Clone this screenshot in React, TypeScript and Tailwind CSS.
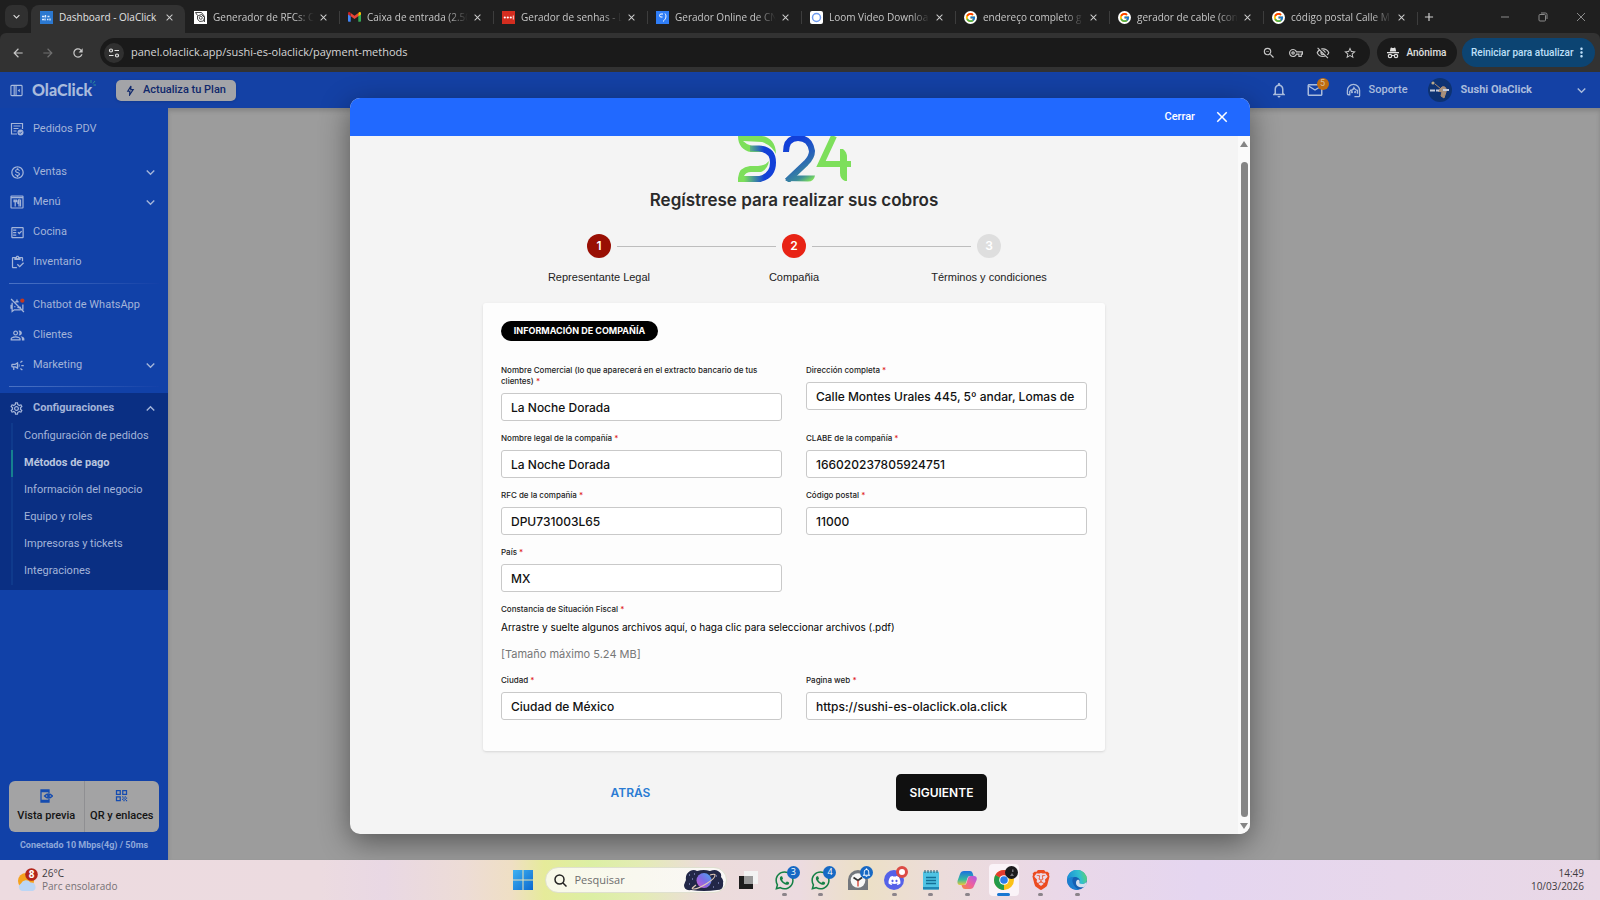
import { useState, ReactNode } from 'react'
import {
  MdAdd,
  MdArrowBack,
  MdArrowForward,
  MdClose,
  MdKeyboardArrowDown,
  MdKeyboardArrowUp,
  MdMailOutline,
  MdMoreVert,
  MdOutlineCampaign,
  MdOutlineFactCheck,
  MdOutlineInventory,
  MdOutlineMonetizationOn,
  MdOutlinePeopleAlt,
  MdOutlineSettings,
  MdOutlineVisibilityOff,
  MdOutlineVpnKey,
  MdNotificationsNone,
  MdQrCode,
  MdRefresh,
  MdStarBorder,
  MdZoomOut,
} from 'react-icons/md'
import { FcGoogle } from 'react-icons/fc'
import { FaDiscord, FaWhatsapp } from 'react-icons/fa'
import { SiBrave } from 'react-icons/si'

interface Tab {
  title: string
  icon: ReactNode
}

const google = (
  <span className="flex size-[13px] shrink-0 items-center justify-center rounded-full bg-white">
    <FcGoogle size={11} />
  </span>
)

const tabs: Tab[] = [
  {
    title: 'Dashboard - OlaClick',
    icon: (
      <svg viewBox="0 0 13 13" className="size-[13px] shrink-0">
        <rect width="13" height="13" fill="#2b78d0" />
        <path d="M2 5.500h2.500M5.500 4v2.500M7.500 5.500h2M2 8.500h2M5 7.500v2M7 8.500h1.500M10 7.500v2" stroke="#dbeafe" strokeWidth="1.300" />
      </svg>
    ),
  },
  {
    title: 'Generador de RFCs: C',
    icon: (
      <svg viewBox="0 0 13 13" className="size-[13px] shrink-0">
        <rect width="13" height="13" fill="#fff" />
        <path d="M1.500 1.500h6l3 4v5.500M1.500 1.500l2 3M3.500 5l4-1.500 3 3-1 3.500-4 .5-2-2.500z" fill="none" stroke="#333" strokeWidth=".9" />
        <circle cx="6.800" cy="6.800" r="1.500" fill="none" stroke="#333" strokeWidth=".8" />
      </svg>
    ),
  },
  {
    title: 'Caixa de entrada (2.50',
    icon: (
      <svg viewBox="0 0 24 18" className="w-[13px] shrink-0">
        <path d="M0 2v14.500A1.500 1.500 0 0 0 1.500 18H5V7z" fill="#4285f4" />
        <path d="M24 2v14.500a1.500 1.500 0 0 1-1.500 1.500H19V7z" fill="#34a853" />
        <path d="M5 2l7 5 7-5v6l-7 5-7-5z" fill="#ea4335" />
        <path d="M0 2.500C0 .2 2.500-.6 4 .9L5 2v6L0 4.500z" fill="#c5221f" />
        <path d="M24 2.500C24 .2 21.500-.6 20 .9L19 2v6l5-3.500z" fill="#fbbc04" />
      </svg>
    ),
  },
  {
    title: 'Gerador de senhas - L',
    icon: (
      <svg viewBox="0 0 13 13" className="size-[13px] shrink-0">
        <rect width="13" height="13" fill="#d32d1f" />
        <circle cx="2.800" cy="6.500" r="1.100" fill="#fff" />
        <circle cx="5.800" cy="6.500" r="1.100" fill="#fff" />
        <circle cx="8.800" cy="6.500" r="1.100" fill="#fff" />
        <path d="M11.300 4.500v4" stroke="#fff" strokeWidth=".8" />
      </svg>
    ),
  },
  {
    title: 'Gerador Online de CN',
    icon: (
      <svg viewBox="0 0 13 13" className="size-[13px] shrink-0">
        <rect width="13" height="13" fill="#2f7df6" />
        <path d="M7 3H5a1.500 1.500 0 0 0 0 3h1.500M9 2.500c1.500 2 1.500 5-2 8" fill="none" stroke="#fff" strokeWidth="1" />
      </svg>
    ),
  },
  {
    title: 'Loom Video Downloa',
    icon: (
      <svg viewBox="0 0 13 13" className="size-[13px] shrink-0">
        <rect width="13" height="13" rx="2" fill="#fff" />
        <circle cx="6.500" cy="6.500" r="4" fill="#fff" stroke="#6f9bf0" strokeWidth="1.500" />
      </svg>
    ),
  },
  { title: 'endereço completo g', icon: google },
  { title: 'gerador de cable (con', icon: google },
  { title: 'código postal Calle M', icon: google },
]

function BrowserChrome() {
  return (
    <div className="bg-[#1f1f1f] font-['Open_Sans',sans-serif]">
      <div className="flex h-[33px] items-center">
        <button aria-label="Buscar guias" className="ml-[5px] flex size-[23px] items-center justify-center rounded-[7px] bg-[#303030] text-[#e0e0e0]">
          <MdKeyboardArrowDown size={13} />
        </button>
        <div className="ml-[3px] flex min-w-0 items-end self-end">
          {tabs.map((tab, i) => (
            <div
              key={tab.title}
              className={
                i === 0
                  ? 'flex h-[28px] w-[154px] items-center rounded-t-[8px] bg-[#323232] pr-[10px] pb-[4px] pl-[9px]'
                  : 'flex h-[28px] w-[154px] items-center pr-[10px] pb-[4px]'
              }
            >
              {i > 0 && <span className={i === 1 ? 'mr-2 h-[13px] w-px' : 'mr-2 h-[13px] w-px bg-[#3d3d3d]'} />}
              {tab.icon}
              <span
                className={
                  i === 0
                    ? 'ml-[6px] min-w-0 flex-1 text-[10px] whitespace-nowrap text-[#e3e3e3]'
                    : 'ml-[6px] min-w-0 flex-1 overflow-hidden mask-r-from-80% text-[10px] whitespace-nowrap text-[#c7c7c7]'
                }
              >
                {tab.title}
              </span>
              <button aria-label="Fechar guia" className="ml-[4px] text-[#d0d0d0]">
                <MdClose size={11} />
              </button>
            </div>
          ))}
          <span className="mb-2 h-[13px] w-px bg-[#3d3d3d]" />
        </div>
        <button aria-label="Nova guia" className="ml-[4px] text-[#d0d0d0]">
          <MdAdd size={14} />
        </button>
        <div className="ml-auto flex items-center gap-[28px] pr-[14px] text-[#8a8a8a]">
          <button aria-label="Minimizar">
            <svg viewBox="0 0 10 10" className="size-[10px]" fill="none" stroke="currentColor">
              <path d="M1 5h8" />
            </svg>
          </button>
          <button aria-label="Restaurar">
            <svg viewBox="0 0 10 10" className="size-[10px]" fill="none" stroke="currentColor">
              <rect x="1" y="2.500" width="6.500" height="6.500" rx="1" />
              <path d="M3 1h4.500A1.500 1.500 0 0 1 9 2.500V7" />
            </svg>
          </button>
          <button aria-label="Fechar">
            <svg viewBox="0 0 10 10" className="size-[10px]" fill="none" stroke="currentColor">
              <path d="M1 1l8 8M9 1l-8 8" />
            </svg>
          </button>
        </div>
      </div>

      <div className="flex h-[39px] items-center rounded-t-[6px] bg-[#323232] pr-[5px] pl-[11px]">
        <div className="flex gap-4 text-[#c7c7c7]">
          <button aria-label="Voltar">
            <MdArrowBack size={14} />
          </button>
          <button aria-label="Avançar" className="text-[#707070]">
            <MdArrowForward size={14} />
          </button>
          <button aria-label="Recarregar">
            <MdRefresh size={14} />
          </button>
        </div>
        <div className="ml-[15px] flex h-[29px] flex-1 items-center rounded-full bg-[#1a1a1a] pr-[13px] pl-[4px]">
          <button aria-label="Informações do site" className="flex size-[20px] items-center justify-center rounded-full bg-[#303030]">
            <svg viewBox="0 0 12 12" className="size-[12px]" fill="none" stroke="#e3e3e3" strokeWidth="1.200">
              <circle cx="3" cy="3.500" r="1.500" />
              <circle cx="9" cy="8.500" r="1.500" />
              <path d="M6.500 3.500H11M1 8.500h4.500" />
            </svg>
          </button>
          <input
            type="text"
            aria-label="Endereço"
            defaultValue="panel.olaclick.app/sushi-es-olaclick/payment-methods"
            className="ml-[7px] min-w-0 flex-1 bg-transparent text-[11px] text-[#d6d6d6] outline-none"
          />
          <div className="flex gap-[13px] text-[#c7c7c7]">
            <button aria-label="Zoom">
              <MdZoomOut size={14} />
            </button>
            <button aria-label="Senhas">
              <MdOutlineVpnKey size={14} />
            </button>
            <button aria-label="Cookies bloqueados">
              <MdOutlineVisibilityOff size={14} />
            </button>
            <button aria-label="Favoritos">
              <MdStarBorder size={14} />
            </button>
          </div>
        </div>
        <button className="ml-[7px] flex h-[29px] w-[80px] items-center justify-center gap-[7px] rounded-full bg-[#1a1a1a] font-['Roboto',sans-serif] text-[10px] font-medium text-[#e0e0e0]">
          <svg viewBox="0 0 12 12" className="size-[12px]" fill="currentColor">
            <path d="M3.500 1.200c.2-.7.800-.7 1.300-.4.800.4 1.600.4 2.400 0 .5-.3 1.100-.3 1.300.4L9.200 4.500H2.800z" />
            <rect y="5" width="12" height="1.300" />
            <circle cx="3" cy="9" r="1.700" fill="none" stroke="currentColor" strokeWidth="1.200" />
            <circle cx="9" cy="9" r="1.700" fill="none" stroke="currentColor" strokeWidth="1.200" />
            <path d="M4.700 8.700q1.300-.8 2.600 0" fill="none" stroke="currentColor" />
          </svg>
          Anônima
        </button>
        <button className="ml-[5px] flex h-[29px] w-[133px] items-center justify-between rounded-full bg-[#0c4472] pr-[6px] pl-[9px] font-['Roboto',sans-serif] text-[10px] font-medium whitespace-nowrap text-[#bfe0fa]">
          Reiniciar para atualizar
          <MdMoreVert size={15} className="shrink-0" />
        </button>
      </div>
    </div>
  )
}

function AppHeader() {
  return (
    <header className="flex h-9 items-center bg-[#1441a5] pr-[10px] pl-[10px] text-[#a9bbdc]">
      <button aria-label="Contraer menú">
        <svg viewBox="0 0 14 14" className="size-[13px]" fill="none" stroke="currentColor" strokeWidth="1.200">
          <rect x="1" y="1.500" width="12" height="11" rx="1" />
          <path d="M4.500 1.500v11M6.500 1.500v11" />
          <path d="M10.500 5v4L8.300 7z" fill="currentColor" stroke="none" />
        </svg>
      </button>
      <a href="#inicio" className="relative ml-[9px] w-[62px] font-['Lato',sans-serif] text-[16px] leading-none font-black">
        OlaClick
        <svg viewBox="0 0 6 6" className="absolute -top-[2px] -right-[2px] size-[6px]" stroke="#2f8f9a" strokeWidth="1">
          <path d="M1 3V0M3 3.500L5 1M3.500 5H6" />
        </svg>
      </a>
      <button className="ml-[22px] flex h-[21px] w-[120px] items-center justify-center gap-[8px] rounded-[5px] bg-[#a3a4a8] text-[11px] font-medium text-[#10286b] shadow">
        <svg viewBox="0 0 10 12" className="h-[11px] w-[9px]" fill="none" stroke="currentColor" strokeWidth="1.300">
          <path d="M5.500 1L2 6.800h2.300L4 11l4-6H5.300z" />
        </svg>
        Actualiza tu Plan
      </button>

      <div className="ml-auto flex items-center">
        <button aria-label="Notificaciones">
          <MdNotificationsNone size={18} />
        </button>
        <button aria-label="Mensajes" className="relative ml-[18px]">
          <MdMailOutline size={18} />
          <span className="absolute -top-[3px] -right-[5px] flex size-[12px] items-center justify-center rounded-full bg-[#c06c10] text-[9px] text-[#d8c0a0]">
            5
          </span>
        </button>
        <button className="ml-[22px] flex items-center gap-[8px] text-[11px] font-medium">
          <svg viewBox="0 0 16 16" className="size-[15px]" fill="none" stroke="currentColor" strokeWidth="1.400">
            <path d="M1.500 11V8a6.500 6.500 0 0 1 13 0v5.500a1 1 0 0 1-1 1H9M1.500 9v2.500a1 1 0 0 0 1 1H4V8.500" />
            <path d="M4 8c3 0 4-1.500 4.500-3 1 2 2 3 3.800 3v3.500" />
            <circle cx="6.300" cy="9.800" r=".5" />
            <circle cx="9.800" cy="9.800" r=".5" />
          </svg>
          Soporte
        </button>
        <button className="ml-[20px] flex items-center text-[11px] font-bold">
          <svg viewBox="0 0 24 24" className="mr-[9px] size-[24px]">
            <circle cx="12" cy="12" r="12" fill="#0d3272" />
            <path d="M7 6l6 5M14 9c3-1 5 1 4 5l-2 6-3-2 1-4-4-1z" fill="#a5917f" stroke="#b08e70" />
            <path d="M2 12.500h5M8 12.500h3M15 12h6" stroke="#c2cbdc" strokeWidth="2" />
            <circle cx="5" cy="5" r="1.600" fill="#b9a98b" />
          </svg>
          Sushi OlaClick
          <MdKeyboardArrowDown size={17} className="ml-[41px]" />
        </button>
      </div>
    </header>
  )
}

interface NavItem {
  label: string
  icon: ReactNode
  expandable?: boolean
}

const mainNav: NavItem[] = [
  { label: 'Ventas', icon: <MdOutlineMonetizationOn size={15} />, expandable: true },
  {
    label: 'Menú',
    icon: (
      <svg viewBox="0 0 14 14" className="size-[14px]" fill="none" stroke="currentColor" strokeWidth="1.200">
        <rect x="1" y="1" width="12" height="12" rx=".5" />
        <path d="M1 2.500h12" strokeWidth="1.500" />
        <path d="M4 4.500v2.200h2.500V4.500M5.200 4.500v7M9 11.500v-7c-1 .5-1.200 2.500-1 4h1M10.500 4.500v7" />
      </svg>
    ),
    expandable: true,
  },
  { label: 'Cocina', icon: <MdOutlineFactCheck size={15} /> },
  { label: 'Inventario', icon: <MdOutlineInventory size={15} /> },
]

const customerNav: NavItem[] = [
  {
    label: 'Chatbot de WhatsApp',
    icon: (
      <svg viewBox="0 0 14 14" className="size-[15px]" fill="none" stroke="currentColor" strokeWidth="1.200">
        <path d="M1 1l12 12M2 4.500v8l2-1.500h6M5 3.500h3M6.500 1.500v2M12 6v5M2 7H1v3M4 8h1" />
        <path d="M7 8.500q1.500 1 3 0" />
        <circle cx="11.500" cy="2.500" r="2" fill="#c2371f" stroke="none" />
      </svg>
    ),
  },
  { label: 'Clientes', icon: <MdOutlinePeopleAlt size={15} /> },
  { label: 'Marketing', icon: <MdOutlineCampaign size={15} />, expandable: true },
]

const settingsNav = [
  'Configuración de pedidos',
  'Métodos de pago',
  'Información del negocio',
  'Equipo y roles',
  'Impresoras y tickets',
  'Integraciones',
]

function NavRow({ label, icon, expandable }: NavItem) {
  return (
    <a href="#menu" className="flex h-[30px] items-center pr-[9px] pl-[9px]">
      <span className="flex w-[16px] justify-center">{icon}</span>
      <span className="ml-[8px] flex-1">{label}</span>
      {expandable && <MdKeyboardArrowDown size={17} />}
    </a>
  )
}

function Divider() {
  return <div className="mx-[9px] my-[6px] h-px bg-linear-to-r from-[#4a72c4] to-[#1441a8]" />
}

function Sidebar() {
  return (
    <aside className="flex w-[168px] shrink-0 flex-col bg-[#1141a8] text-[11px] text-[#a3b4d9]">
      <nav className="pt-[6px]">
        <NavRow
          label="Pedidos PDV"
          icon={
            <svg viewBox="0 0 14 14" className="size-[14px]" fill="none" stroke="currentColor" strokeWidth="1.200">
              <path d="M7 12H1.500V1.500h11V7M3.500 4h7M3.500 6.500h5M3.500 9h3" />
              <circle cx="10.500" cy="10.500" r="3" fill="currentColor" stroke="none" />
              <path d="M9.200 10.500l1 1 1.700-1.800" stroke="#1141a8" strokeWidth=".9" />
            </svg>
          }
        />
        <div className="mt-[13px]">
          {mainNav.map((item) => (
            <NavRow key={item.label} {...item} />
          ))}
        </div>
        <Divider />
        {customerNav.map((item) => (
          <NavRow key={item.label} {...item} />
        ))}
        <Divider />
        <div className="bg-[#0a2f83] pb-[5px]">
          <a href="#configuraciones" className="flex h-[30px] items-center pr-[9px] pl-[9px] font-bold">
            <MdOutlineSettings size={15} />
            <span className="ml-[9px] flex-1">Configuraciones</span>
            <MdKeyboardArrowUp size={17} />
          </a>
          <ul className="ml-[11px]">
            {settingsNav.map((item) => (
              <li
                key={item}
                className={
                  item === 'Métodos de pago'
                    ? 'flex h-[27px] items-center border-l-2 border-[#16808f] pl-[11px] font-bold text-[#b9c5de]'
                    : 'flex h-[27px] items-center border-l-2 border-[#0f3a8c] pl-[11px]'
                }
              >
                <a href="#configuraciones">{item}</a>
              </li>
            ))}
          </ul>
        </div>
      </nav>

      <div className="mt-auto flex flex-col px-[9px] pb-[8px]">
        <div className="flex h-[51px] rounded-[6px] bg-[#a3a3a4] font-medium text-[#141414]">
          <button className="flex flex-1 flex-col items-center justify-center gap-[5px] border-r border-[#8f8f92]">
            <svg viewBox="0 0 14 14" className="size-[14px]" fill="none" stroke="#154cb0" strokeWidth="1.300">
              <path d="M10 4V1H2v12h8v-3M2 2.500h8M2 11.500h8" />
              <path d="M5.500 7Q9.500 3 13.500 7 9.500 11 5.500 7z" />
              <circle cx="9.500" cy="7" r=".8" fill="#154cb0" />
            </svg>
            Vista previa
          </button>
          <button className="flex flex-1 flex-col items-center justify-center gap-[5px] whitespace-nowrap">
            <MdQrCode size={15} color="#154cb0" />
            QR y enlaces
          </button>
        </div>
        <p className="mt-[7px] text-center text-[9px] leading-[13px] font-bold text-[#8fa8da]">Conectado 10 Mbps(4g) / 50ms</p>
      </div>
    </aside>
  )
}

function D24Logo() {
  return (
    <svg viewBox="0 0 113 46" className="h-[46px] w-[113px]" fill="none" strokeWidth="6">
      <defs>
        <linearGradient id="bowl" x1="0" y1="0" x2="1" y2="0">
          <stop offset="0" stopColor="#7ddf5b" />
          <stop offset=".3" stopColor="#4d9d92" />
          <stop offset=".7" stopColor="#1240d8" />
        </linearGradient>
        <linearGradient id="two" gradientUnits="userSpaceOnUse" x1="52" y1="10" x2="74" y2="44">
          <stop offset="0" stopColor="#1240d8" />
          <stop offset=".5" stopColor="#2a68b4" />
          <stop offset=".8" stopColor="#3c8c9a" />
          <stop offset="1" stopColor="#7ddf5b" />
        </linearGradient>
      </defs>
      <path d="M0 0h24C32 1 38 7 38 18c-3-6-8-10-14-12L5 5q4 4 9 5h9v6H13C5 15 0 9 0 0z" fill="#7ddf5b" />
      <path d="M0 46V42Q1 31 12 30h8q7 0 11-5-1 8-8 11H13q-5 0-7 4h8v6z" fill="#7ddf5b" />
      <path d="M12 12.500h9q14 1 14 14T22 43H6" stroke="url(#bowl)" />
      <path d="M48 16Q48 2 60 2t14 13q0 6-6 12L49 45" stroke="url(#two)" />
      <path d="M47 45l10-7q-2 3-1 1.500h21q-1 6-7 6z" fill="url(#two)" />
      <path d="M96 0L83 28h30" stroke="#7ddf5b" />
      <path d="M102 13h3q4 3 4 8v24h-2q-5-2-5-8z" fill="#7ddf5b" />
    </svg>
  )
}

interface Step {
  label: string
  tone: string
}

const steps: Step[] = [
  { label: 'Representante Legal', tone: 'bg-[#990f04]' },
  { label: 'Compañia', tone: 'bg-[#e82315]' },
  { label: 'Términos y condiciones', tone: 'bg-[#dedede]' },
]

function Stepper() {
  return (
    <ol className="mt-[22px] grid w-[585px] grid-cols-3">
      {steps.map((step, i) => (
        <li key={step.label} className="flex flex-col items-center">
          <div className="flex w-full items-center">
            <span className={i === 0 ? 'h-px flex-1' : 'h-px flex-1 bg-[#bdbdbd]'} />
            <span className={`mx-[6px] flex size-[24px] items-center justify-center rounded-full text-[12px] font-semibold text-white ${step.tone}`}>
              {i + 1}
            </span>
            <span className={i === 2 ? 'h-px flex-1' : 'h-px flex-1 bg-[#bdbdbd]'} />
          </div>
          <span className="mt-[12px] font-['Liberation_Sans',sans-serif] text-[11px] leading-[14px] text-[#222]">{step.label}</span>
        </li>
      ))}
    </ol>
  )
}

function Required() {
  return <span className="text-[#e02020]"> *</span>
}

interface FieldProps {
  id: string
  label: string
  value: string
}

function Field({ id, label, value }: FieldProps) {
  return (
    <div>
      <label htmlFor={id} className="mb-[6px] block text-[8px] leading-[11px] font-medium text-[#222]">
        {label}
        <Required />
      </label>
      <input
        id={id}
        type="text"
        defaultValue={value}
        className="block h-[28px] w-full rounded-[3px] border border-[#c9c9c9] bg-white px-[9px] text-[12px] font-medium text-[#111] outline-none"
      />
    </div>
  )
}

function PaymentModal({ onClose }: { onClose: () => void }) {
  return (
    <div className="absolute inset-0 flex justify-center p-[26px]">
      <div
        role="dialog"
        aria-label="Regístrese para realizar sus cobros"
        className="flex w-[900px] max-w-full flex-col overflow-hidden rounded-[10px] bg-[#f4f4f4] shadow-[0_8px_30px_rgba(0,0,0,0.45)]"
      >
        <div className="flex h-[38px] shrink-0 items-center justify-end gap-[18px] bg-[#2169ff] pr-[19px] text-white">
          <span className="text-[11px] font-medium">Cerrar</span>
          <button aria-label="Cerrar" onClick={onClose}>
            <MdClose size={18} />
          </button>
        </div>

        <div className="flex flex-1">
          <div className="flex flex-1 flex-col items-center font-['Inter',sans-serif]">
            <D24Logo />
            <h1 className="mt-[6px] text-[17px] leading-[24px] font-semibold text-[#2a2a2a]">Regístrese para realizar sus cobros</h1>
            <Stepper />

            <form
              className="mt-[19px] w-[622px] rounded-[3px] bg-[#fdfdfd] px-[18px] pt-[18px] pb-[31px] shadow"
              onSubmit={(e) => e.preventDefault()}
            >
              <h2 className="flex h-[20px] w-[157px] items-center justify-center rounded-full bg-black text-[9px] font-bold text-white">
                INFORMACIÓN DE COMPAÑÍA
              </h2>
              <div className="mt-[24px] grid grid-cols-2 gap-x-6 gap-y-[12px]">
                <Field id="comercial" label="Nombre Comercial (lo que aparecerá en el extracto bancario de tus clientes)" value="La Noche Dorada" />
                <Field id="direccion" label="Dirección completa" value="Calle Montes Urales 445, 5º andar, Lomas de" />
                <Field id="legal" label="Nombre legal de la compañía" value="La Noche Dorada" />
                <Field id="clabe" label="CLABE de la compañía" value="166020237805924751" />
                <Field id="rfc" label="RFC de la compañía" value="DPU731003L65" />
                <Field id="postal" label="Código postal" value="11000" />
                <Field id="pais" label="País" value="MX" />
              </div>
              <label className="mt-[12px] block">
                <span className="block text-[8px] leading-[11px] font-medium text-[#222]">
                  Constancia de Situación Fiscal
                  <Required />
                </span>
                <span className="mt-[4px] block text-[10px] leading-[16px] text-black">
                  Arrastre y suelte algunos archivos aquí, o haga clic para seleccionar archivos (.pdf)
                </span>
                <input type="file" accept=".pdf" className="sr-only" />
              </label>
              <p className="mt-[11px] text-[11px] leading-[16px] text-[#777]">[Tamaño máximo 5.24 MB]</p>
              <div className="mt-[13px] grid grid-cols-2 gap-x-6">
                <Field id="ciudad" label="Ciudad" value="Ciudad de México" />
                <Field id="web" label="Pagina web" value="https://sushi-es-olaclick.ola.click" />
              </div>
            </form>

            <div className="mt-[23px] mr-4 grid w-[622px] grid-cols-2 justify-items-center text-[12px] font-semibold">
              <button className="h-[37px] w-[91px] text-[#2a7bd3]">ATRÁS</button>
              <button className="h-[37px] w-[91px] rounded-[5px] bg-[#101010] text-white">SIGUIENTE</button>
            </div>
          </div>

          <div className="flex w-[12px] flex-col items-center bg-[#fafafa] py-[5px]">
            <svg viewBox="0 0 8 6" className="h-[6px] w-[8px]" fill="#858585">
              <path d="M4 0l4 6H0z" />
            </svg>
            <div className="mt-[15px] mb-[6px] w-[7px] flex-1 rounded-full bg-[#858585]" />
            <svg viewBox="0 0 8 6" className="h-[6px] w-[8px]" fill="#858585">
              <path d="M4 6l4-6H0z" />
            </svg>
          </div>
        </div>
      </div>
    </div>
  )
}

interface TaskApp {
  name: string
  icon: ReactNode
  badge?: ReactNode
  idle?: boolean
}

const blueBadge = 'absolute -top-[4px] -right-[5px] flex size-[13px] items-center justify-center rounded-full bg-[#1769c4] text-[9px] text-white'

const apps: TaskApp[] = [
  {
    name: 'Visão de tarefas',
    idle: true,
    icon: (
      <svg viewBox="0 0 20 20" className="size-[20px]">
        <rect x="1" y="6" width="14" height="13" fill="#1d1d1d" />
        <rect x="6" y="1" width="14" height="13" fill="#f3f3f3" />
        <rect x="6" y="6" width="9" height="8" fill="#9a9a9a" />
      </svg>
    ),
  },
  { name: 'WhatsApp', icon: <FaWhatsapp size={21} color="#148045" />, badge: <span className={blueBadge}>3</span> },
  { name: 'WhatsApp Business', icon: <FaWhatsapp size={21} color="#148045" />, badge: <span className={blueBadge}>4</span> },
  {
    name: 'Relógio',
    idle: true,
    icon: (
      <svg viewBox="0 0 20 20" className="size-[20px]">
        <path d="M0 20V10a10 10 0 0 1 20 0v10z" fill="#73777d" />
        <circle cx="10" cy="10.500" r="7.300" fill="#f7f7f7" />
        <path d="M5.500 7.500L10 10.500l4-3" fill="none" stroke="#333" strokeWidth="1.800" />
        <path d="M10 10.500v6" stroke="#d83b2b" strokeWidth="1.300" />
      </svg>
    ),
    badge: (
      <span className={blueBadge}>
        <MdNotificationsNone size={11} />
      </span>
    ),
  },
  {
    name: 'Discord',
    icon: (
      <span className="flex size-[20px] items-center justify-center rounded-full bg-[#5562e8] text-white">
        <FaDiscord size={13} />
      </span>
    ),
    badge: <span className="absolute -top-[4px] -right-[4px] size-[12px] rounded-full border-[3px] border-[#dc4b45] bg-white" />,
  },
  {
    name: 'Bloco de notas',
    icon: (
      <svg viewBox="0 0 16 20" className="h-[20px] w-[16px]">
        <rect x="0" y="1.500" width="16" height="18" rx="1" fill="#4fc3e4" />
        <path d="M2 0v3M5 0v3M8 0v3M11 0v3M14 0v3" stroke="#27576a" />
        <path d="M3 7.500h10M3 10.500h10M3 13.500h10" stroke="#136f96" strokeWidth="1.300" />
        <path d="M0 17h16v2.500H0z" fill="#1f86b4" />
      </svg>
    ),
  },
  {
    name: 'Copilot',
    icon: (
      <svg viewBox="0 0 20 20" className="size-[20px]">
        <defs>
          <linearGradient id="cpa" x1="0" y1="0" x2="0" y2="1">
            <stop offset="0" stopColor="#1c6fe0" />
            <stop offset=".6" stopColor="#35b9a0" />
            <stop offset="1" stopColor="#e8c93a" />
          </linearGradient>
          <linearGradient id="cpb" x1="1" y1="0" x2="0" y2="1">
            <stop offset="0" stopColor="#a95ae8" />
            <stop offset=".5" stopColor="#ee5fa0" />
            <stop offset="1" stopColor="#f58a3c" />
          </linearGradient>
        </defs>
        <path d="M7 1h6q2 0 2.600 2L16.500 6H13q-2 0-2.600 2L9 13q-.6 2-2.500 2H3q-3 0-2.500-4L3 4q1-3 4-3z" fill="url(#cpa)" />
        <path d="M13 19H8q-2.200 0-2.800-2L4.500 15H7q2 0 2.600-2L11 8q.6-2 2.500-2H17q3.500 0 2.600 4L17 16q-1 3-4 3z" fill="url(#cpb)" />
      </svg>
    ),
  },
  {
    name: 'Chrome',
    icon: (
      <svg viewBox="0 0 20 20" className="size-[20px]">
        <circle cx="10" cy="10" r="10" fill="#fbc116" />
        <path d="M10 10L1.340 5a10 10 0 0 1 17.320 0z" fill="#e33b2e" />
        <path d="M10 10L10 20A10 10 0 0 1 1.340 5z" fill="#229a4b" />
        <circle cx="10" cy="10" r="4.800" fill="#fff" />
        <circle cx="10" cy="10" r="3.800" fill="#2b7de9" />
      </svg>
    ),
    badge: (
      <svg viewBox="0 0 13 13" className="absolute -top-[4px] -right-[4px] size-[13px]">
        <circle cx="6.500" cy="6.500" r="6.500" fill="#1b1b1d" />
        <path d="M5 10l2-3 2 3zM7 3.500h1.500V6H7z" fill="#74747a" />
      </svg>
    ),
  },
  { name: 'Brave', icon: <SiBrave size={20} color="#ec4b20" /> },
  {
    name: 'Edge',
    icon: (
      <svg viewBox="0 0 20 20" className="size-[20px]">
        <defs>
          <linearGradient id="edge" x1="0" y1=".4" x2="1" y2=".2">
            <stop offset="0" stopColor="#1b8fd6" />
            <stop offset=".6" stopColor="#31bfd0" />
            <stop offset="1" stopColor="#5fd46a" />
          </linearGradient>
        </defs>
        <circle cx="10" cy="10" r="10" fill="#1560b3" />
        <path d="M0 10A10 10 0 0 1 20 9.500c0 3-2.500 4.500-5 4.500-2 0-3-.8-2.500-1.700C14 9.500 11 7 8 7 4 7 1 9 0 10z" fill="url(#edge)" />
        <path d="M12.500 12.300c-.5.900.500 1.700 2.500 1.700 1.700 0 3.200-.6 4.100-1.800l.6.800c-.5 1.600-1.400 3-2.500 4-6 1.500-9-2-8-5.500.4-1.400 2-2 2.800-1.400.6.600.8 1.400.5 2.200z" fill="#e9eef5" opacity=".9" />
        <path d="M0 10C1 8 4 6.500 7 7 4 9 5 16 12 19.700A10 10 0 0 1 0 10z" fill="#1c7fd0" />
      </svg>
    ),
  },
]

function Taskbar() {
  return (
    <footer className="relative flex h-10 items-center justify-center bg-[linear-gradient(90deg,#eddbe0_0%,#ecdbe0_20%,#e9d8e4_24%,#eddcd6_29%,#efdfc4_32%,#e6eb9a_34%,#dcefa4_37%,#e3ecb4_40%,#ecdcdb_44%,#ecdbe0_50%,#ece0c6_54%,#ecdcdb_59%,#ead8e8_66%,#e5d6f0_75%,#e9d8e6_100%)] font-['Open_Sans',sans-serif] text-[10px] text-[#3d3a3d]">
      <a href="#clima" className="absolute left-[17px] flex items-center gap-[4px] leading-[13px]">
        <svg viewBox="0 0 21 24" className="h-[24px] w-[21px]">
          <circle cx="9" cy="13" r="8" fill="#f6a21d" />
          <path d="M5 23a4 4 0 0 1-1-7.500 5.500 5.500 0 0 1 9.500-1A4.500 4.500 0 0 1 16 23z" fill="#bcd6f5" />
          <circle cx="14.500" cy="6.500" r="6.300" fill="#b3261a" />
          <text x="14.500" y="10" textAnchor="middle" fontSize="10" fontWeight="700" fill="#fff">
            8
          </text>
        </svg>
        <span>
          26°C
          <br />
          <span className="text-[#757175]">Parc ensolarado</span>
        </span>
      </a>

      <div className="flex items-center gap-[3px]">
        <button aria-label="Iniciar" className="flex w-[37px] justify-center">
          <svg viewBox="0 0 20 20" className="size-[20px]">
            <defs>
              <linearGradient id="win" x1="0" y1="0" x2="1" y2="1">
                <stop offset="0" stopColor="#3fb2f2" />
                <stop offset="1" stopColor="#0b69cf" />
              </linearGradient>
            </defs>
            <path d="M0 0h9.500v9.500H0zM10.500 0H20v9.500h-9.500zM0 10.500h9.500V20H0zM10.500 10.500H20V20h-9.500z" fill="url(#win)" />
          </svg>
        </button>
        <div className="flex h-[26px] w-[182px] items-center rounded-full border border-[#dfe0cf] bg-linear-to-r from-[#f8f9e8] to-[#faf7f6] pr-[2px] pl-[8px]">
          <svg viewBox="0 0 13 13" className="size-[13px] shrink-0" fill="none" stroke="#222" strokeWidth="1.500">
            <circle cx="5.500" cy="5.500" r="4.500" />
            <path d="M9 9l3.500 3.500" />
          </svg>
          <input
            type="text"
            aria-label="Pesquisar"
            placeholder="Pesquisar"
            className="ml-[8px] min-w-0 flex-1 bg-transparent text-[11px] outline-none placeholder:text-[#6d6d6d]"
          />
          <svg viewBox="0 0 40 21" className="h-[21px] w-[40px] shrink-0">
            <defs>
              <linearGradient id="planet" x1="0" y1="1" x2="1" y2="0">
                <stop offset="0" stopColor="#d15bd0" />
                <stop offset=".5" stopColor="#7d6be6" />
                <stop offset="1" stopColor="#48a8f0" />
              </linearGradient>
            </defs>
            <path d="M6 1q4-2 7 0 7-2 13 0 5-2 8 0 4 2 3 6 3 3 2 6 1 7-6 7-13 2-26 0-7 1-7-5 1-3 2-5-1-6 4-9z" fill="#222747" />
            <path d="M5 5h1M8 9h1M5 14h1M32 6h1M34 13h1M29 17h1M10 4h1" stroke="#aab4ee" />
            <circle cx="20" cy="10.500" r="7.500" fill="url(#planet)" />
            <path d="M12 15c-4 3-5 4-2 4 5 0 22-10 21-14 0-1-2-1-5 0" fill="none" stroke="#e0c9b6" strokeWidth="1.200" />
          </svg>
        </div>
        <div className="flex w-[366px]">
          {apps.map((app) => (
            <div key={app.name} className="flex flex-1 justify-center">
              <button
                aria-label={app.name}
                className={
                  app.name === 'Chrome'
                    ? 'relative flex h-[32px] w-[30px] items-center justify-center rounded-[4px] bg-[#faf3f8]'
                    : 'relative flex h-[32px] w-[30px] items-center justify-center'
                }
              >
                <span className="relative">
                  {app.icon}
                  {app.badge}
                </span>
                {!app.idle && (
                  <span
                    className={
                      app.name === 'Chrome'
                        ? 'absolute bottom-0 h-[3px] w-[13px] rounded-full bg-[#1976d2]'
                        : 'absolute bottom-0 h-[3px] w-[5px] rounded-full bg-[#8b848a]'
                    }
                  />
                )}
              </button>
            </div>
          ))}
        </div>
      </div>

      <time className="absolute right-[16px] text-right leading-[13px]">
        14:49
        <br />
        10/03/2026
      </time>
    </footer>
  )
}

export default function App() {
  const [open, setOpen] = useState(true)

  return (
    <div className="flex min-h-screen flex-col font-['Roboto',sans-serif]">
      <BrowserChrome />
      <div className="relative flex flex-1 flex-col bg-[#9c9c9c]">
        <AppHeader />
        <div className="flex flex-1">
          <Sidebar />
          <main className="flex-1 shadow-[inset_0_3px_4px_rgba(0,0,0,0.15)]" />
        </div>
        {open && <PaymentModal onClose={() => setOpen(false)} />}
      </div>
      <Taskbar />
    </div>
  )
}
